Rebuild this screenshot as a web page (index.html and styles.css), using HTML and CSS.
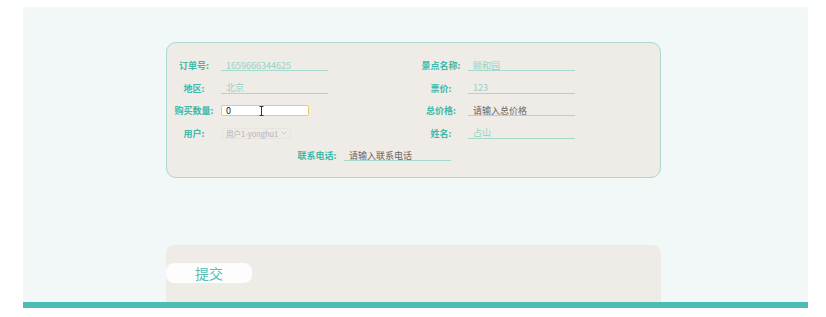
FILE: index.html
```html
<!DOCTYPE html>
<html lang="zh-CN">
<head>
    <meta charset="UTF-8">
    <meta name="viewport" content="width=device-width, initial-scale=1.0">
    <title>订单</title>
    <link rel="stylesheet" href="styles.css">
</head>
<body>
    <div class="page">
        <main class="panel">
            <!-- Order Form -->
            <form class="order-card">
                <div class="field">
                    <label>订单号:</label>
                    <input type="text" class="field-input" value="1659666344625" readonly>
                </div>
                <div class="field">
                    <label>景点名称:</label>
                    <input type="text" class="field-input" value="颐和园" readonly>
                </div>
                <div class="field">
                    <label>地区:</label>
                    <input type="text" class="field-input" value="北京" readonly>
                </div>
                <div class="field">
                    <label>票价:</label>
                    <input type="text" class="field-input" value="123" readonly>
                </div>
                <div class="field">
                    <label>购买数量:</label>
                    <span class="focus-wrap">
                        <input type="text" class="field-input active" value="0">
                        <svg class="ibeam" width="5" height="10" viewBox="0 0 5 10">
                            <path d="M0.5 0.5h4M2.5 0.5v9M0.5 9.5h4" stroke="#333" stroke-width="1" fill="none"/>
                        </svg>
                    </span>
                </div>
                <div class="field">
                    <label>总价格:</label>
                    <input type="text" class="field-input editable" placeholder="请输入总价格">
                </div>
                <div class="field">
                    <label>用户:</label>
                    <span class="fake-select">用户1-yonghu1
                        <svg width="6" height="4" viewBox="0 0 6 4"><path d="M0.5 0.5l2.5 2.5l2.5-2.5" stroke="#c8c8c8" fill="none"/></svg>
                    </span>
                </div>
                <div class="field">
                    <label>姓名:</label>
                    <input type="text" class="field-input" value="占山" readonly>
                </div>
                <div class="field field-phone">
                    <label>联系电话:</label>
                    <input type="text" class="field-input editable" placeholder="请输入联系电话">
                </div>
            </form>

            <!-- Submit -->
            <div class="submit-card">
                <button type="button" class="submit-button">提交</button>
            </div>
        </main>
        <div class="bottom-bar"></div>
    </div>
</body>
</html>
```

FILE: styles.css
```css
/* Global Styles */
body {
    margin: 0;
    padding: 0;
    background: #ffffff;
    font-family: "Noto Sans CJK SC", "Noto Sans", sans-serif;
}

.page {
    width: 785px;
    margin: 7px 0 0 23px;
}

.panel {
    background: #f2f7f8;
    height: 295px;
    padding-top: 35px;
    box-sizing: border-box;
    overflow: hidden;
}

/* Order Card */
.order-card {
    display: grid;
    grid-template-columns: 247px 1fr;
    grid-auto-rows: 11px;
    row-gap: 11.5px;
    width: 495px;
    margin: 0 0 0 143px;
    padding: 17px 0 16px 7px;
    box-sizing: border-box;
    background: #efebe6;
    border: 1px solid #a9d9d1;
    border-radius: 10px;
}

.field {
    display: flex;
    align-items: center;
    height: 11px;
}

.field label {
    width: 40px;
    margin-right: 7px;
    text-align: center;
    white-space: nowrap;
    font-size: 9px;
    font-weight: bold;
    color: #3fb9aa;
}

.field-input {
    width: 107px;
    height: 11px;
    box-sizing: border-box;
    padding: 0 5px;
    border: none;
    border-bottom: 1px solid #a3dacd;
    background: transparent;
    font-family: inherit;
    font-size: 9px;
    line-height: 10px;
    color: #93d3c8;
    outline: none;
}

.field-input.editable {
    color: #555;
}

.field-input::placeholder {
    color: #666;
}

.focus-wrap {
    position: relative;
    display: flex;
    height: 11px;
}

.field-input.active {
    width: 88px;
    padding: 0 4px;
    border: 1px solid #f1c56f;
    border-radius: 2px;
    background: #ffffff;
    color: #222;
}

.ibeam {
    position: absolute;
    left: 38px;
    top: 1px;
}

.fake-select {
    display: inline-flex;
    align-items: center;
    gap: 3px;
    height: 11px;
    padding: 0 3px;
    margin-left: 1px;
    box-sizing: border-box;
    border: 1px solid #e8e4de;
    border-radius: 2px;
    font-size: 7.5px;
    color: #b3b3b3;
}

.field-phone {
    grid-column: 1 / -1;
    margin-left: 123px;
}

/* Submit Card */
.submit-card {
    width: 495px;
    height: 80px;
    margin: 67px 0 0 143px;
    padding-top: 18px;
    box-sizing: border-box;
    background: #efebe6;
    border-radius: 8px;
}

.submit-button {
    display: block;
    width: 86px;
    height: 20px;
    padding: 0;
    border: none;
    border-radius: 8px;
    background: #fdfdfd;
    font-family: inherit;
    font-size: 14px;
    line-height: 20px;
    color: #55bdb3;
    cursor: pointer;
}

/* Bottom Bar */
.bottom-bar {
    height: 6px;
    background: #4dbdb3;
}
```
